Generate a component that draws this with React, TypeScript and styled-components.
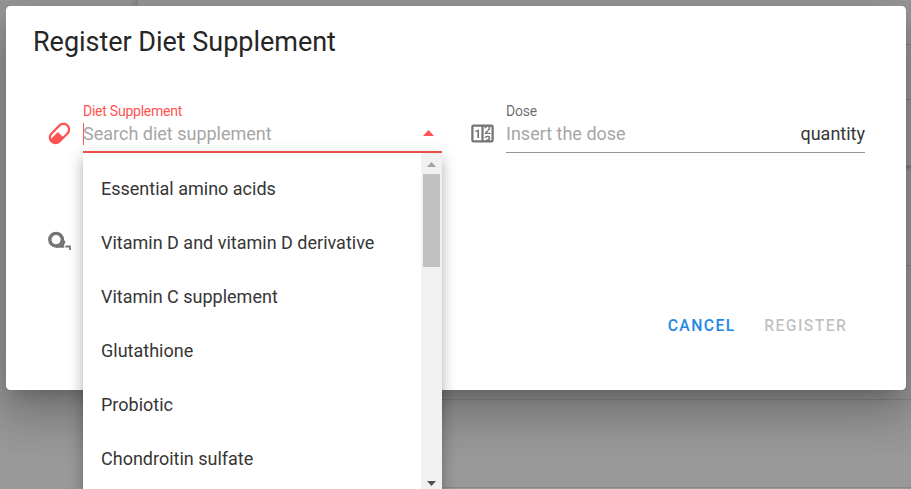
import React from 'react';
import styled, { createGlobalStyle } from 'styled-components';

const GlobalStyle = createGlobalStyle`
  *, *::before, *::after { box-sizing: border-box; }
  html, body { margin: 0; padding: 0; overflow: hidden; }
  body { font-family: Roboto, sans-serif; font-size: 18px; color: #262626; }
`;

const Page = styled.div`
  position: relative;
  width: 911px;
  height: 489px;
  overflow: hidden;
  background: #999;
`;

const Backdrop = styled.div`
  position: absolute;
  inset: 0;
  display: grid;
  grid-template-columns: 138px 1fr;
`;

const SidePanel = styled.div`
  background: linear-gradient(to right, #999 128px, #8c8c8c 137px, #858585 138px);
`;

const BackdropRows = styled.div`
  display: grid;
  grid-template-rows: 45px 55px 66px 100px 134px 88px 1fr;
`;

const BackdropRow = styled.div<{ $raised?: boolean }>`
  border-bottom: 1px solid #888;
  box-shadow: ${(p) => (p.$raised ? '0 2px 4px rgba(0, 0, 0, 0.3)' : 'none')};
`;

const Dialog = styled.section`
  position: relative;
  width: 900px;
  height: 384px;
  margin: 6px 0 0 6px;
  padding: 18px 41px 0 27px;
  display: flex;
  flex-direction: column;
  background: #fff;
  border-radius: 4.5px;
  box-shadow:
    0 12.4px 17px -8px rgba(0, 0, 0, 0.2),
    0 27px 43px 3.4px rgba(0, 0, 0, 0.14),
    0 10px 52px 9px rgba(0, 0, 0, 0.12);
`;

const Title = styled.h1`
  margin: 0;
  font-size: 27px;
  font-weight: 400;
  line-height: 36px;
  letter-spacing: -0.03px;
`;

const Fields = styled.div`
  display: grid;
  grid-template-columns: 394px 394px;
  column-gap: 29px;
  margin: 42px 0 0 15px;
`;

const Field = styled.div`
  display: grid;
  grid-template-columns: 35px 1fr;
  align-items: start;
`;

const IconSlot = styled.div<{ $active?: boolean }>`
  margin: 18px 0 0 -2px;
  width: 27px;
  height: 27px;
  color: ${(p) => (p.$active ? '#ff5252' : '#757575')};
  svg { display: block; }
`;

const Control = styled.div<{ $active?: boolean }>`
  position: relative;
  height: 51px;
  border-bottom: ${(p) => (p.$active ? '2px solid #f9514f' : '1px solid #949494')};
`;

const Label = styled.label<{ $active?: boolean }>`
  display: block;
  height: 18px;
  font-size: 14px;
  line-height: 18px;
  letter-spacing: -0.24px;
  color: ${(p) => (p.$active ? '#ff5252' : 'rgba(0, 0, 0, 0.6)')};
`;

const InputRow = styled.div`
  display: flex;
  align-items: center;
  height: 27px;
`;

const Caret = styled.span`
  width: 1px;
  height: 22px;
  margin-right: -1px;
  background: #ff5252;
`;

const Placeholder = styled.span`
  flex: 1;
  color: #a6a6a6;
`;

const Suffix = styled.span`
  color: #363636;
`;

const Arrow = styled.svg`
  margin: 0 8px 1px 0;
`;

const Menu = styled.div`
  position: absolute;
  top: 51px;
  left: 0;
  z-index: 2;
  width: 359px;
  height: 336px;
  display: flex;
  background: #fff;
  box-shadow:
    0 5.6px 5.6px -3.4px rgba(0, 0, 0, 0.2),
    0 9px 11px 1px rgba(0, 0, 0, 0.14),
    0 3.4px 15.8px 2.3px rgba(0, 0, 0, 0.12);
`;

const Options = styled.ul`
  flex: 1;
  margin: 0;
  padding: 9px 0 0;
  list-style: none;
  overflow: hidden;
`;

const Option = styled.li`
  height: 54px;
  padding-left: 18px;
  line-height: 54px;
  color: #363636;
`;

const ScrollTrack = styled.div`
  width: 21px;
  display: flex;
  flex-direction: column;
  align-items: center;
  padding: 9px 0 3px;
  background: #f1f1f1;
`;

const Thumb = styled.div`
  width: 17px;
  height: 93px;
  margin: 7px 0 auto;
  background: #c1c1c1;
`;

const TapeRow = styled.div`
  margin: 57px 0 0 15px;
  height: 27px;
`;

const Actions = styled.div`
  display: flex;
  justify-content: flex-end;
  gap: 28.5px;
  padding-right: 17.7px;
  margin-top: 79px;
`;

const Action = styled.button<{ $disabled?: boolean }>`
  padding: 0;
  border: 0;
  background: none;
  font: 500 15.75px/20px Roboto, sans-serif;
  letter-spacing: 1.4px;
  text-transform: uppercase;
  color: ${(p) => (p.$disabled ? 'rgba(0, 0, 0, 0.26)' : '#1e88e5')};
`;

const options = [
  'Essential amino acids',
  'Vitamin D and vitamin D derivative',
  'Vitamin C supplement',
  'Glutathione',
  'Probiotic',
  'Chondroitin sulfate',
];

const PILL =
  'M4.22,11.29L11.29,4.22C13.64,1.88 17.43,1.88 19.78,4.22C22.12,6.56 22.12,10.36 19.78,12.71L12.71,19.78C10.36,22.12 6.56,22.12 4.22,19.78C1.88,17.43 1.88,13.64 4.22,11.29M5.64,12.71C4.59,13.75 4.24,15.24 4.6,16.57L10.59,10.59L14.83,14.83L18.36,11.29C19.93,9.73 19.93,7.2 18.36,5.64C16.8,4.07 14.27,4.07 12.71,5.64L5.64,12.71Z';
const COUNTER =
  'M4,4H20A2,2 0 0,1 22,6V18A2,2 0 0,1 20,20H4A2,2 0 0,1 2,18V6A2,2 0 0,1 4,4M4,6V18H11V6H4M20,18V6H18.76C19,6.54 18.95,7.07 18.95,7.13C18.88,7.8 18.41,8.5 18.24,8.75L15.91,11.3L19.23,11.28L19.24,12.5L14.04,12.47L14,11.47C14,11.47 17.05,8.24 17.2,7.95C17.34,7.67 17.91,6 16.5,6C15.27,6.05 15.41,7.3 15.41,7.3L13.87,7.31C13.87,7.31 13.88,6.65 14.25,6H13V18H15.58L15.57,17.14L16.54,17.13C16.54,17.13 17.45,16.97 17.46,16.08C17.5,15.08 16.65,15.08 16.5,15.08C16.37,15.08 15.43,15.13 15.43,15.95H13.91C13.91,15.95 13.95,13.89 16.5,13.89C19.1,13.89 18.96,15.91 18.96,15.91C18.96,15.91 19,17.16 17.85,17.63L18.37,18H20M8.92,16H7.42V10.2L5.62,10.76V9.53L8.76,8.41H8.92V16Z';

const Icon = ({ d }: { d: string }) => (
  <svg width="27" height="27" viewBox="0 0 24 24" fill="currentColor">
    <path d={d} />
  </svg>
);

const TapeIcon = () => (
  <svg width="27" height="27" viewBox="0 0 27 27">
    <circle cx="10.1" cy="11.7" r="6.3" fill="none" stroke="currentColor" strokeWidth="3.4" />
    <path d="M10 19.7V16.8L14 15.2 15 11.7H18.3V12.8H19.2V15.7H18.2V19.7zM19.4 17.5H24.8V21.9H23V19.4H19.4z" fill="currentColor" />
  </svg>
);

export default function App() {
  return (
    <>
      <GlobalStyle />
      <Page>
        <Backdrop>
          <SidePanel />
          <BackdropRows>
            <BackdropRow />
            <BackdropRow />
            <BackdropRow $raised />
            <BackdropRow />
            <BackdropRow />
            <BackdropRow />
          </BackdropRows>
        </Backdrop>
        <Dialog>
          <Title>Register Diet Supplement</Title>
          <Fields>
            <Field>
              <IconSlot $active><Icon d={PILL} /></IconSlot>
              <Control $active>
                <Label $active>Diet Supplement</Label>
                <InputRow>
                  <Caret />
                  <Placeholder>Search diet supplement</Placeholder>
                  <Arrow width="11" height="6" viewBox="0 0 11 6"><path d="M0 6 5.5 0 11 6z" fill="#ff5252" /></Arrow>
                </InputRow>
                <Menu>
                  <Options>
                    {options.map((o) => <Option key={o}>{o}</Option>)}
                  </Options>
                  <ScrollTrack>
                    <svg width="9" height="5" viewBox="0 0 9 5"><path d="M0 5 4.5 0 9 5z" fill="#a3a3a3" /></svg>
                    <Thumb />
                    <svg width="9" height="5" viewBox="0 0 9 5"><path d="M0 0h9L4.5 5z" fill="#505050" /></svg>
                  </ScrollTrack>
                </Menu>
              </Control>
            </Field>
            <Field>
              <IconSlot><Icon d={COUNTER} /></IconSlot>
              <Control>
                <Label>Dose</Label>
                <InputRow>
                  <Placeholder>Insert the dose</Placeholder>
                  <Suffix>quantity</Suffix>
                </InputRow>
              </Control>
            </Field>
          </Fields>
          <TapeRow>
            <IconSlot><TapeIcon /></IconSlot>
          </TapeRow>
          <Actions>
            <Action>Cancel</Action>
            <Action $disabled>Register</Action>
          </Actions>
        </Dialog>
      </Page>
    </>
  );
}
